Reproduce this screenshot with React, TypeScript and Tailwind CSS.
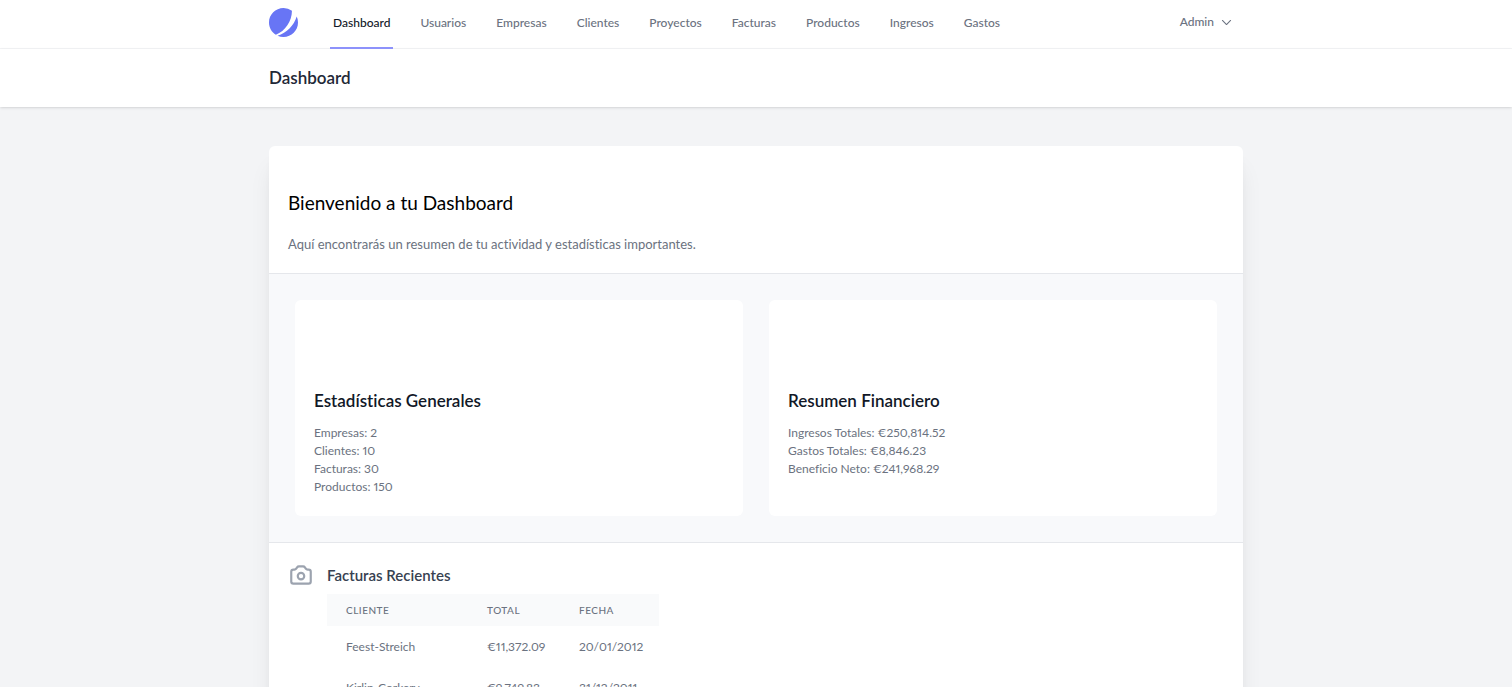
import React from "react";

const navItems = ["Dashboard", "Usuarios", "Empresas", "Clientes", "Proyectos", "Facturas", "Productos", "Ingresos", "Gastos"];

const invoices = [
  { client: "Feest-Streich", total: "€11,372.09", date: "20/01/2012" },
  { client: "Kirlin-Corkery", total: "€9,749.83", date: "31/12/2011" },
];

const summaries = [
  { title: "Estadísticas Generales", lines: ["Empresas: 2", "Clientes: 10", "Facturas: 30", "Productos: 150"] },
  { title: "Resumen Financiero", lines: ["Ingresos Totales: €250,814.52", "Gastos Totales: €8,846.23", "Beneficio Neto: €241,968.29"] },
];

function Logo() {
  return (
    <svg viewBox="0 0 48 48" className="size-[29px]" fill="#6875F5" aria-hidden="true">
      <path d="M11.395 44.428C4.557 40.198 0 32.632 0 24 0 10.745 10.745 0 24 0a23.891 23.891 0 0113.997 4.502c-.2 17.907-11.097 33.245-26.602 39.926z" />
      <path d="M14.134 45.885A23.914 23.914 0 0024 48c13.255 0 24-10.745 24-24 0-3.516-.756-6.856-2.115-9.866-4.659 15.143-16.608 27.092-31.75 31.751z" />
    </svg>
  );
}

function CameraIcon() {
  return (
    <svg viewBox="0 0 24 24" className="size-[26px] shrink-0 text-[#9ca3af]" fill="none" stroke="currentColor" strokeWidth="2" strokeLinecap="round" strokeLinejoin="round" aria-hidden="true">
      <path d="M3 9a2 2 0 012-2h.93a2 2 0 001.664-.89l.812-1.22A2 2 0 0110.07 4h3.86a2 2 0 011.664.89l.812 1.22A2 2 0 0018.07 7H19a2 2 0 012 2v9a2 2 0 01-2 2H5a2 2 0 01-2-2V9z" />
      <path d="M15 13a3 3 0 11-6 0 3 3 0 016 0z" />
    </svg>
  );
}

function NavBar() {
  return (
    <nav className="border-b border-[#f3f4f6] bg-white">
      <div className="mx-auto flex h-12 max-w-[974px] items-stretch">
        <a href="#" aria-label="Inicio" className="flex items-center pb-1">
          <Logo />
        </a>
        <div className="-mb-px ml-8 flex gap-6">
          {navItems.map((item, i) => (
            <a
              key={item}
              href="#"
              className={
                i === 0
                  ? "flex items-center border-b-2 border-[#8d92fb] px-[3px] pb-0.5 text-xs font-medium text-[#111827]"
                  : "flex items-center border-b-2 border-transparent px-[3px] pb-0.5 text-xs font-medium text-[#6b7280]"
              }
            >
              {item}
            </a>
          ))}
        </div>
        <button type="button" className="mr-2.5 ml-auto flex items-center gap-1.5 pb-1 text-xs font-medium text-[#6b7280]">
          Admin
          <svg viewBox="0 0 24 24" className="size-[13px]" fill="none" stroke="currentColor" strokeWidth="2" strokeLinecap="round" strokeLinejoin="round" aria-hidden="true">
            <path d="M19.5 8.25l-7.5 7.5-7.5-7.5" />
          </svg>
        </button>
      </div>
    </nav>
  );
}

export default function App() {
  return (
    <div className="min-h-screen bg-[#f3f4f6] font-['Lato',sans-serif] proportional-nums [font-variant-ligatures:none]">
      <NavBar />
      <header className="bg-white shadow-sm">
        <div className="mx-auto max-w-[974px] py-[19px]">
          <h1 className="text-[17px] leading-5 font-semibold text-[#1f2937]">Dashboard</h1>
        </div>
      </header>
      <main className="mx-auto max-w-[974px] py-[39px]">
        <div className="overflow-hidden rounded-md bg-white shadow-xl">
          <section className="border-b border-[#e5e7eb] px-[19px] pt-11 pb-[19px]">
            <h2 className="text-[19px] leading-[26px] text-black">Bienvenido a tu Dashboard</h2>
            <p className="mt-[18px] text-[13px] leading-5 text-[#6b7280]">
              Aquí encontrarás un resumen de tu actividad y estadísticas importantes.
            </p>
          </section>
          <section className="grid grid-cols-2 gap-[26px] bg-[#f8f9fb] p-[26px]">
            {summaries.map((summary) => (
              <article key={summary.title} className="rounded-md bg-white px-[19px] pt-[90px] pb-5">
                <h3 className="text-[17px] leading-[22px] font-semibold text-[#111827]">{summary.title}</h3>
                <ul className="mt-3 text-xs leading-[18px] text-[#6b7280]">
                  {summary.lines.map((line) => (
                    <li key={line}>{line}</li>
                  ))}
                </ul>
              </article>
            ))}
          </section>
          <section className="border-t border-[#e5e7eb] p-[19px]">
            <div className="flex items-center gap-[13px]">
              <CameraIcon />
              <h3 className="text-[15px] leading-[26px] font-semibold text-[#374151]">Facturas Recientes</h3>
            </div>
            <table className="mt-1.5 ml-[39px] w-[332px] text-left">
              <thead className="bg-[#f9fafb]">
                <tr className="h-8 text-[10px] tracking-wider text-[#6b7280] uppercase">
                  <th scope="col" className="w-[141px] pl-[19px] font-medium">Cliente</th>
                  <th scope="col" className="w-[92px] pl-[19px] font-medium">Total</th>
                  <th scope="col" className="pl-[19px] font-medium">Fecha</th>
                </tr>
              </thead>
              <tbody>
                {invoices.map((invoice) => (
                  <tr key={invoice.client} className="h-[41px] text-xs text-[#6b7280]">
                    <td className="pl-[19px]">{invoice.client}</td>
                    <td className="pl-[19px]">{invoice.total}</td>
                    <td className="pl-[19px]">{invoice.date}</td>
                  </tr>
                ))}
              </tbody>
            </table>
          </section>
        </div>
      </main>
    </div>
  );
}
